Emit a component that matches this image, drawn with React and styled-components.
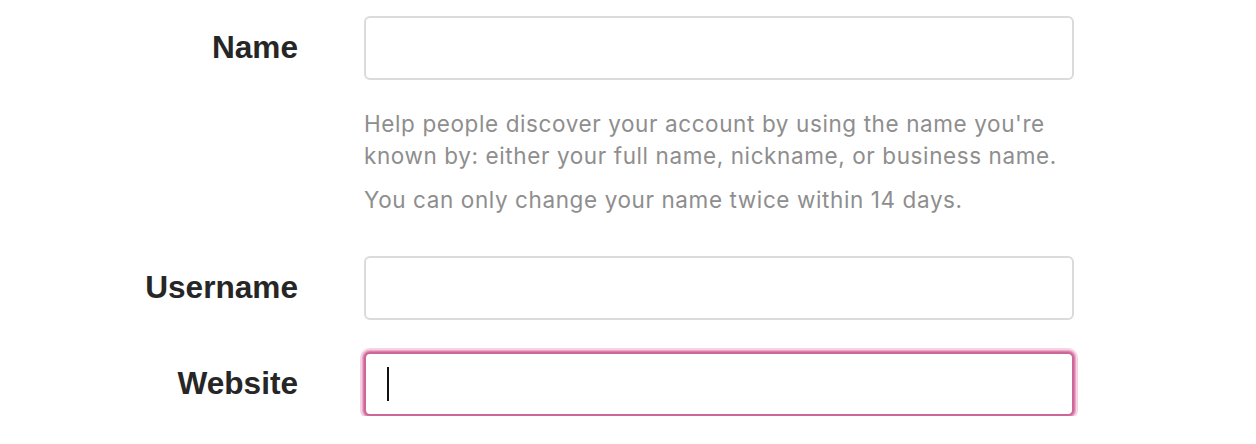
import React from "react";
import styled, { createGlobalStyle } from "styled-components";

const GlobalStyle = createGlobalStyle`
  html, body {
    margin: 0;
    padding: 0;
    background: #ffffff;
  }
  body {
    font-family: "Liberation Sans", Arial, sans-serif;
    -webkit-font-smoothing: antialiased;
  }
`;

const fields = [
  {
    id: "name",
    label: "Name",
    help: [
      "Help people discover your account by using the name you're known by: either your full name, nickname, or business name.",
      "You can only change your name twice within 14 days.",
    ],
  },
  { id: "username", label: "Username" },
  { id: "website", label: "Website", focused: true },
];

export default function App() {
  return (
    <>
      <GlobalStyle />
      <Form onSubmit={(e) => e.preventDefault()}>
        {fields.map((field) => (
          <Row key={field.id}>
            <Label htmlFor={field.id}>{field.label}</Label>
            <Column>
              <Field $focused={field.focused}>
                {field.focused && <Caret />}
                <Input id={field.id} type="text" />
              </Field>
              {field.help && (
                <Help>
                  {field.help.map((text) => (
                    <p key={text}>{text}</p>
                  ))}
                </Help>
              )}
            </Column>
          </Row>
        ))}
      </Form>
    </>
  );
}

const Form = styled.form`
  display: flex;
  flex-direction: column;
  gap: 32px;
  padding-top: 16px;
`;

const Row = styled.div`
  display: grid;
  grid-template-columns: 298px 710px;
  column-gap: 66px;
  align-items: start;
`;

const Label = styled.label`
  height: 64px;
  line-height: 62px;
  text-align: right;
  font-size: 31.6px;
  font-weight: 700;
  color: #262626;
`;

const Column = styled.div`
  display: flex;
  flex-direction: column;
`;

const Field = styled.div`
  box-sizing: border-box;
  height: 64px;
  display: flex;
  align-items: center;
  padding-left: 21px;
  border: 2px solid ${(p) => (p.$focused ? "#cc6797" : "#dbdbdb")};
  border-radius: 6px;
  background: #ffffff;
  box-shadow: ${(p) =>
    p.$focused ? "0 0 0 1px #d684ab, 0 0 0 2px #eba7c7, 0 0 0 4px #f8d2e3" : "none"};
`;

const Caret = styled.span`
  width: 2px;
  height: 34px;
  background: #111111;
  flex-shrink: 0;
`;

const Input = styled.input`
  flex: 1;
  min-width: 0;
  height: 100%;
  border: none;
  outline: none;
  background: transparent;
  font: inherit;
  font-size: 22px;
  color: #262626;
  caret-color: transparent;
  padding: 0;
`;

const Help = styled.div`
  margin-top: 28px;
  margin-bottom: 8px;
  font-family: Inter, "Liberation Sans", sans-serif;
  color: #8e8e8e;
  font-size: 22.5px;
  letter-spacing: 0.6px;
  line-height: 32px;
  p {
    margin: 0;
  }
  p + p {
    margin-top: 12px;
  }
`;
